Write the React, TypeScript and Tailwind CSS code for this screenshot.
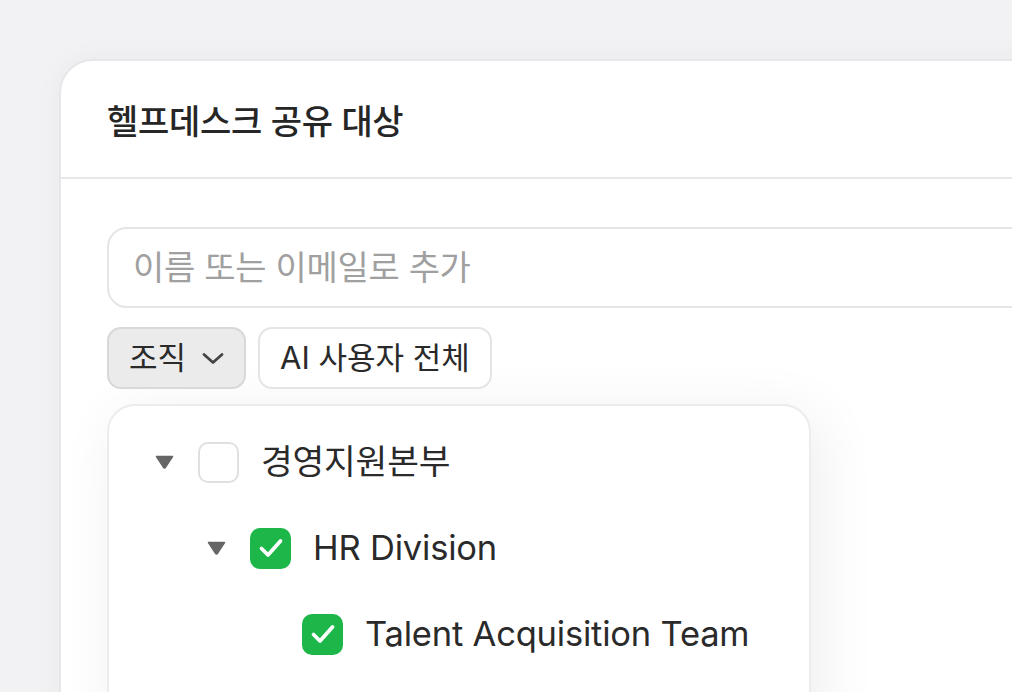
import React from 'react';

const font = { fontFamily: '"Inter", "Noto Sans CJK KR", sans-serif' };

const Caret: React.FC = () => (
  <svg width="19" height="14" viewBox="0 0 19 14" className="shrink-0">
    <path d="M1.5 1.5 H17.5 L10.6 12.2 Q9.5 13.6 8.4 12.2 Z" fill="#666666" stroke="#666666" strokeWidth="1.5" strokeLinejoin="round" />
  </svg>
);

const Checkbox: React.FC<{ checked?: boolean }> = ({ checked }) =>
  checked ? (
    <span className="flex h-[41px] w-[41px] shrink-0 items-center justify-center rounded-[10px] bg-[#1cb748]">
      <svg width="30" height="30" viewBox="0 0 30 30" fill="none">
        <path d="M5.5 15.5 L12 22 L24.5 8" stroke="white" strokeWidth="3.8" strokeLinecap="round" strokeLinejoin="round" />
      </svg>
    </span>
  ) : (
    <span className="h-[41px] w-[41px] shrink-0 rounded-[10px] border-2 border-[#e0e0e0] bg-white" />
  );

type Node = { label: string; depth: number; expandable?: boolean; checked?: boolean };

const nodes: Node[] = [
  { label: '경영지원본부', depth: 0, expandable: true },
  { label: 'HR Division', depth: 1, expandable: true, checked: true },
  { label: 'Talent Acquisition Team', depth: 2, checked: true },
];

const indent = ['pl-[46px]', 'pl-[98px]', 'pl-[150px]'];

export default function App() {
  return (
    <div className="h-[692px] w-[1012px] overflow-hidden bg-[#f2f2f4]" style={font}>
      <div className="ml-[59px] mt-[59px] w-[1100px] rounded-tl-[34px] border-2 border-[#e7e7e9] bg-white shadow-[0_0_30px_rgba(0,0,0,0.04)]">
        <div className="flex h-[118px] items-center border-b-2 border-[#e8e8e8] px-[46px]">
          <h2 className="pt-[4px] text-[34px] font-medium tracking-[-0.3px] text-[#262626]">헬프데스크 공유 대상</h2>
        </div>
        <div className="px-[46px] pt-[48px]">
          <div className="flex h-[81px] items-center rounded-[20px] border-2 border-[#e5e5e5] px-[24px]">
            <span className="text-[34px] tracking-[-0.3px] text-[#a0a0a0]">이름 또는 이메일로 추가</span>
          </div>
          <div className="mt-[19px] flex gap-[12px]">
            <button className="flex h-[62px] w-[139px] items-center gap-[15px] rounded-[14px] border-2 border-[#d8d8d8] bg-[#ebebeb] pl-[20px] text-[31px] text-[#2a2a2a]">
              <span>조직</span>
              <svg width="24" height="24" viewBox="0 0 24 24" fill="none">
                <path d="M3 8.5 L12 16.5 L21 8.5" stroke="#444" strokeWidth="2.8" strokeLinecap="round" strokeLinejoin="round" />
              </svg>
            </button>
            <button className="flex h-[62px] items-center rounded-[14px] border-2 border-[#e5e5e5] bg-white px-[20px] text-[31px] text-[#2a2a2a]">
              AI 사용자 전체
            </button>
          </div>
          <div className="mt-[15px] w-[704px] rounded-t-[28px] border-2 border-[#ececec] bg-white pb-[60px] pt-[13px] shadow-[10px_10px_60px_rgba(0,0,0,0.07)]">
            {nodes.map((n) => (
              <div key={n.label} className={`flex h-[86px] items-center ${indent[n.depth]}`}>
                <span className="flex w-[43px] shrink-0 items-center">{n.expandable && <Caret />}</span>
                <Checkbox checked={n.checked} />
                <span className="ml-[22px] text-[34.5px] tracking-[-0.2px] text-[#2a2a2a]">{n.label}</span>
              </div>
            ))}
          </div>
        </div>
      </div>
    </div>
  );
}
